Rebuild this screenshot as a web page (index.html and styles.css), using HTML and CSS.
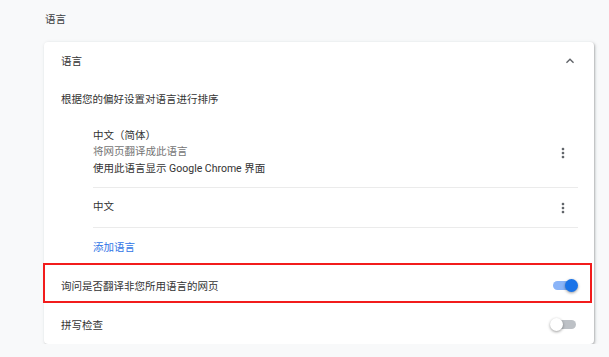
FILE: index.html
```html
<!DOCTYPE html>
<html lang="zh-CN">
<head>
    <meta charset="UTF-8">
    <title>语言设置</title>
    <link rel="stylesheet" href="styles.css">
</head>
<body>
    <div class="page">
        <h2 class="section-title">语言</h2>

        <div class="card">
            <!-- 折叠标题 -->
            <div class="row header-row">
                <span>语言</span>
                <svg class="chevron" viewBox="0 0 24 24" width="16" height="16">
                    <path d="M12 8l-6 6 1.41 1.41L12 10.83l4.59 4.58L18 14z" fill="#5f6368"/>
                </svg>
            </div>

            <div class="row desc-row">根据您的偏好设置对语言进行排序</div>

            <div class="lang-list">
                <div class="lang-item lang-item-tall">
                    <div class="lang-text">
                        <div>中文（简体）</div>
                        <div class="secondary">将网页翻译成此语言</div>
                        <div>使用此语言显示 Google Chrome 界面</div>
                    </div>
                    <span class="kebab">
                        <svg viewBox="0 0 24 24" width="16" height="16">
                            <path d="M12 8c1.1 0 2-.9 2-2s-.9-2-2-2-2 .9-2 2 .9 2 2 2zm0 2c-1.1 0-2 .9-2 2s.9 2 2 2 2-.9 2-2-.9-2-2-2zm0 6c-1.1 0-2 .9-2 2s.9 2 2 2 2-.9 2-2-.9-2-2-2z" fill="#5f6368"/>
                        </svg>
                    </span>
                </div>
                <div class="lang-item">
                    <div class="lang-text">中文</div>
                    <span class="kebab">
                        <svg viewBox="0 0 24 24" width="16" height="16">
                            <path d="M12 8c1.1 0 2-.9 2-2s-.9-2-2-2-2 .9-2 2 .9 2 2 2zm0 2c-1.1 0-2 .9-2 2s.9 2 2 2 2-.9 2-2-.9-2-2-2zm0 6c-1.1 0-2 .9-2 2s.9 2 2 2 2-.9 2-2-.9-2-2-2z" fill="#5f6368"/>
                        </svg>
                    </span>
                </div>
                <div class="add-row">
                    <a class="add-link">添加语言</a>
                </div>
            </div>

            <div class="row toggle-row ask-row">
                <span>询问是否翻译非您所用语言的网页</span>
                <span class="toggle on"><span class="track"></span><span class="knob"></span></span>
            </div>

            <div class="row toggle-row spell-row">
                <span>拼写检查</span>
                <span class="toggle"><span class="track"></span><span class="knob"></span></span>
            </div>

            <!-- 标注框 -->
            <div class="highlight"></div>
        </div>
    </div>
</body>
</html>
```

FILE: styles.css
```css
:root {
    --page-bg: #f8f9fa;
    --text-color: #333333;
    --secondary-color: #757575;
    --link-color: #2f74e6;
    --divider-color: #ebebeb;
    --toggle-on: #1a73e8;
    --toggle-on-track: #8ab4f8;
    --toggle-off-track: #bdc1c6;
    --mark-color: #f21c1c;
}

body {
    margin: 0;
    background-color: var(--page-bg);
    font-family: Roboto, 'Noto Sans CJK SC', sans-serif;
    font-size: 10.5px;
    color: var(--text-color);
}

.page {
    width: 550px;
    padding: 12px 0 0 44px;
}

.section-title {
    margin: 0 0 14px 1px;
    font-size: 10.5px;
    font-weight: 400;
    line-height: 16px;
    color: #3c4043;
}

.card {
    position: relative;
    background-color: #ffffff;
    border-radius: 4px;
    padding: 0 16px 0 17px;
    box-shadow: 1px 1px 2px rgba(60, 64, 67, 0.3), 1px 1px 4px rgba(60, 64, 67, 0.12);
}

.row {
    display: flex;
    align-items: center;
    justify-content: space-between;
}

.header-row {
    height: 37px;
}

.chevron {
    margin-right: 0;
}

.desc-row {
    height: 39px;
}

.lang-list {
    padding-left: 32px;
}

.lang-item {
    display: flex;
    align-items: center;
    justify-content: space-between;
    height: 39px;
    border-bottom: 1px solid var(--divider-color);
}

.lang-item-tall {
    height: 69px;
}

.lang-text {
    line-height: 16.5px;
}

.secondary {
    color: var(--secondary-color);
}

.kebab {
    display: flex;
    align-items: center;
    justify-content: center;
    width: 30px;
    height: 30px;
}

.add-row {
    display: flex;
    align-items: center;
    height: 37px;
}

.add-link {
    color: var(--link-color);
    cursor: pointer;
}

.toggle-row {
    height: 40px;
}

.spell-row {
    height: 39px;
}

.toggle {
    position: relative;
    display: inline-block;
    width: 28px;
    height: 13px;
}

.toggle .track {
    position: absolute;
    left: 3px;
    top: 2px;
    width: 23px;
    height: 9px;
    border-radius: 5px;
    background-color: var(--toggle-off-track);
}

.toggle .knob {
    position: absolute;
    left: 0;
    top: 0;
    width: 13px;
    height: 13px;
    border-radius: 50%;
    background-color: #ffffff;
    box-shadow: 0 1px 3px rgba(0, 0, 0, 0.4);
}

.toggle.on .track {
    background-color: var(--toggle-on-track);
}

.toggle.on .knob {
    left: 15px;
    background-color: var(--toggle-on);
}

.highlight {
    position: absolute;
    left: -1px;
    top: 221px;
    width: 549px;
    height: 40px;
    box-sizing: border-box;
    border: 2px solid var(--mark-color);
}
```
